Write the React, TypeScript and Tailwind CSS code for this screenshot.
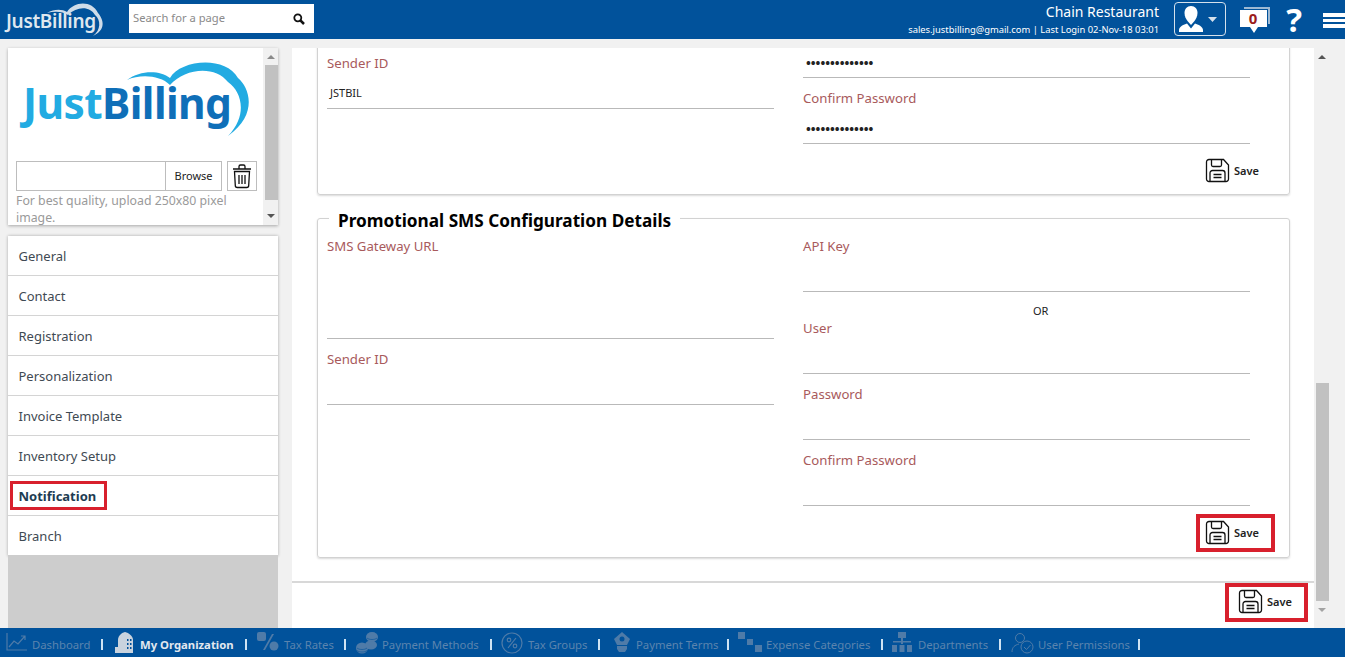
const navItems = ["General", "Contact", "Registration", "Personalization", "Invoice Template", "Inventory Setup", "Notification", "Branch"];

const footerLinks = [
  { label: "Dashboard", x: 32, icon: "dash", ix: 6 },
  { label: "My Organization", x: 140, icon: "org", ix: 115, active: true },
  { label: "Tax Rates", x: 284, icon: "pct", ix: 257 },
  { label: "Payment Methods", x: 382, icon: "coins", ix: 356 },
  { label: "Tax Groups", x: 528, icon: "pctc", ix: 501 },
  { label: "Payment Terms", x: 636, icon: "tag", ix: 613 },
  { label: "Expense Categories", x: 766, icon: "cats", ix: 738 },
  { label: "Departments", x: 918, icon: "tree", ix: 892 },
  { label: "User Permissions", x: 1038, icon: "perm", ix: 1011 },
];
const separators = [101, 245, 344, 490, 598, 727, 881, 999, 1138];

function FooterIcon({ name, active }: { name: string; active?: boolean }) {
  const c = active ? "#c9d3de" : "#4f7ba8";
  if (name === "dash")
    return (
      <svg width="22" height="20" viewBox="0 0 22 20" fill="none" stroke={c} strokeWidth="1.2">
        <path d="M1 1v17h20" />
        <path d="M3 15l5-6 4 3 7-8M15 4h4v4" />
      </svg>
    );
  if (name === "org")
    return (
      <svg width="20" height="21" viewBox="0 0 20 21" fill={c}>
        <path d="M3 8c0-4 3-7 7-8 4 1 8 4 8 8v13H3z" />
        <path d="M0 15h6v6H0z" />
        <path d="M12 7h1.500v2H12zM15 7h1.500v2H15zM12 11h1.500v2H12zM15 11h1.500v2H15zM12 15h1.500v2H12zM15 15h1.500v2H15z" fill="#01529b" />
      </svg>
    );
  if (name === "pct")
    return (
      <svg width="22" height="20" viewBox="0 0 22 20" fill={c}>
        <rect x="0" y="0" width="9" height="9" rx="2" />
        <path d="M6 18L15 2h2L8 18z" />
        <circle cx="17" cy="14" r="4.500" />
      </svg>
    );
  if (name === "coins")
    return (
      <svg width="24" height="22" viewBox="0 0 24 22" fill={c}>
        <ellipse cx="6" cy="16" rx="6" ry="5.500" />
        <ellipse cx="15" cy="13" rx="6" ry="4.500" />
        <ellipse cx="16" cy="5" rx="6" ry="5" />
        <path d="M1 16c2 2 8 2 10 0M1 18.500c2 2 8 2 10 0M11 6c2 2 8 2 10 0" fill="none" stroke="#01529b" strokeWidth="0.600" />
      </svg>
    );
  if (name === "pctc")
    return (
      <svg width="22" height="22" viewBox="0 0 22 22" fill="none" stroke={c} strokeWidth="1.200">
        <circle cx="11" cy="11" r="10" />
        <circle cx="8" cy="8" r="1.800" />
        <circle cx="14" cy="14" r="1.800" />
        <path d="M7 16l8-10" />
      </svg>
    );
  if (name === "tag")
    return (
      <svg width="18" height="21" viewBox="0 0 18 21" fill={c}>
        <path d="M9 0l8 7-3 6H4L1 7z" />
        <path d="M4 14h10v3l-2 3H6l-2-3z" />
        <circle cx="9" cy="7" r="2.500" fill="#01529b" />
      </svg>
    );
  if (name === "cats")
    return (
      <svg width="24" height="20" viewBox="0 0 24 20" fill={c}>
        <rect x="0" y="0" width="7" height="7" />
        <rect x="9" y="7" width="6" height="6" />
        <rect x="17" y="13" width="7" height="7" />
      </svg>
    );
  if (name === "tree")
    return (
      <svg width="20" height="20" viewBox="0 0 20 20" fill={c}>
        <rect x="6" y="0" width="8" height="6" />
        <rect x="9" y="6" width="2" height="6" />
        <rect x="1" y="9" width="18" height="1.500" />
        <rect x="0" y="13" width="5" height="7" />
        <rect x="7.500" y="13" width="5" height="7" />
        <rect x="15" y="13" width="5" height="7" />
      </svg>
    );
  return (
    <svg width="24" height="22" viewBox="0 0 24 22" fill="none" stroke={c} strokeWidth="1">
      <circle cx="9" cy="6" r="4.500" />
      <path d="M1 20c0-5 3-7 7-8" />
      <circle cx="16" cy="15" r="6" />
      <path d="M13 15l2.500 2.500 4-4.500" />
    </svg>
  );
}

function SaveIcon() {
  return (
    <svg width="25" height="25" viewBox="0 0 25 25" fill="none" stroke="#111" strokeWidth="1.300">
      <path d="M1.500 4a2.500 2.500 0 0 1 2.500-2.500h14.500l5 5.500v14a2.500 2.500 0 0 1-2.500 2.500H4a2.500 2.500 0 0 1-2.500-2.500z" />
      <path d="M6.500 1.500v5.500a1.500 1.500 0 0 0 1.500 1.500h7a1.500 1.500 0 0 0 1.500-1.500V1.500" />
      <path d="M5 23.500V15a2.500 2.500 0 0 1 2.500-2.500h10a2.500 2.500 0 0 1 2.500 2.500v8.500" />
      <path d="M8.500 16.500h8M8.500 19.500h8" />
    </svg>
  );
}

function SaveButton({ className }: { className: string }) {
  return (
    <div className={`absolute flex items-center gap-[4px] ${className}`}>
      <SaveIcon />
      <span className="pt-[2px] text-[11px] font-semibold text-[#222]">Save</span>
    </div>
  );
}

function Field({ label, className, value, height }: { label: string; className: string; value?: string; height: string }) {
  return (
    <div className={`absolute border-b border-[#b9b9b9] ${height} ${className}`}>
      <div className="text-[13.2px] leading-[18px] text-[#a85a5c]">{label}</div>
      {value && <div className="mt-[13px] pl-[3px] text-[11px] leading-[16px] text-[#222]">{value}</div>}
    </div>
  );
}

function Dots({ className }: { className: string }) {
  return <div className={`absolute text-[12.800px] font-bold leading-[14px] text-[#222] ${className}`}>••••••••••••••</div>;
}

function Logo() {
  return (
    <div className="absolute left-[12px] top-[12px] h-[80px] w-[236px]">
      <div className="absolute left-[3px] top-[18px] whitespace-nowrap text-[42.500px] font-bold leading-[50px] tracking-[-0.6px]">
        <span className="text-[#22abe2]">Just</span>
        <span className="text-[#0f6fb8]">Billing</span>
      </div>
      <svg className="absolute left-0 top-0" width="236" height="90" viewBox="0 0 236 90" fill="none">
        <path d="M107 20C120 10 140 10 150 18C160 0 205-5 218 18C230 28 238 55 208 76C228 55 222 32 208 22C195 5 165 8 150 25C140 15 120 14 107 20z" fill="#22abe2" />
      </svg>
    </div>
  );
}

export default function App() {
  return (
    <div className="relative h-[657px] w-[1345px] overflow-hidden bg-[#f1f1f1] font-['Open_Sans',sans-serif]">
      {/* Header */}
      <header className="absolute inset-x-0 top-0 h-[39px] bg-[#01529b] text-white">
        <div className="absolute left-[6px] top-[9px] text-[19px] font-semibold leading-[24px] tracking-[-0.3px] text-[#dfe7ef]">JustBilling</div>
        <svg className="absolute left-[44px] top-0" width="62" height="38" viewBox="0 0 62 38" fill="#cfdce9">
          <path d="M3 13C10 9 18 9 23 12C30 1 48 0 54 13C60 20 62 30 49 36C57 30 57 20 51 15C46 6 33 6 24 15C18 11 10 11 3 13z" />
        </svg>
        <div className="absolute left-[129px] top-[4px] flex h-[29px] w-[185px] items-center justify-between bg-white pl-[4px] pr-[9px]">
          <span className="text-[11.200px] text-[#8a8a8a]">Search for a page</span>
          <svg width="12" height="12" viewBox="0 0 12 12" fill="none" stroke="#111">
            <circle cx="4.800" cy="4.800" r="3.500" strokeWidth="1.800" />
            <path d="M7.500 7.500L11 11" strokeWidth="2.500" />
          </svg>
        </div>
        <div className="absolute right-[186px] top-[2px] text-right text-[14px] leading-[19px]">Chain Restaurant</div>
        <div className="absolute right-[186px] top-[23px] whitespace-nowrap text-right text-[9.400px] leading-[13px]">sales.justbilling@gmail.com | Last Login 02-Nov-18 03:01</div>
        <div className="absolute left-[1174px] top-[2px] flex h-[34px] w-[52px] items-center rounded-[4px] border border-[#d5e1ec] pl-[3px]">
          <svg width="26" height="28" viewBox="0 0 26 28" fill="white">
            <path d="M13 1c4 0 6.500 3 6.500 7 0 3-1.500 6-3 8l-3.500 4-3.500-4c-1.500-2-3-5-3-8 0-4 2.500-7 6.500-7z" />
            <path d="M9 18.500l4 5 4-5c3 1 8 3 8 6.500v2H1v-2c0-3.500 5-5.500 8-6.500z" />
          </svg>
          <svg className="ml-[4px]" width="9" height="5" viewBox="0 0 9 5" fill="#d5e1ec">
            <path d="M0 0h9L4.500 5z" />
          </svg>
        </div>
        <svg className="absolute left-[1240px] top-[6px]" width="30" height="28" viewBox="0 0 30 28">
          <path d="M4 1h26v17h-2V3H4z" fill="#9db9d3" />
          <path d="M0 4h27v17H18l-4 6-4-6H0z" fill="white" />
          <text x="13" y="18" textAnchor="middle" fontSize="15" fontWeight="700" fill="#9b1c1c" fontFamily="Open Sans">0</text>
        </svg>
        <div className="absolute left-[1282px] top-0 h-[39px] w-[24px] text-center font-['Liberation_Sans',sans-serif] text-[33px] font-bold leading-[40px]">?</div>
        <div className="absolute left-[1323px] top-[13px] flex w-[22px] flex-col gap-[2px]">
          <div className="h-[3.500px] bg-white" />
          <div className="h-[3.500px] bg-white" />
          <div className="h-[3.500px] bg-white" />
        </div>
      </header>

      {/* Logo card */}
      <div className="absolute left-[8px] top-[48px] h-[177px] w-[270px] bg-white shadow-[0_1px_3px_rgba(0,0,0,0.3)]">
        <Logo />
        <div className="absolute left-[8px] top-[113px] flex h-[30px] w-[206px] border border-[#bdbdbd]">
          <div className="flex-1" />
          <div className="flex w-[56px] items-center justify-center border-l border-[#bdbdbd] text-[11px] text-[#222]">Browse</div>
        </div>
        <div className="absolute left-[219px] top-[113px] flex h-[30px] w-[30px] items-center justify-center border border-[#bdbdbd]">
          <svg width="20" height="25" viewBox="0 0 20 25" fill="none" stroke="#111" strokeWidth="1.300">
            <path d="M1 5h18M7 4.500V2.500a1.500 1.500 0 0 1 1.500-1.500h3A1.500 1.500 0 0 1 13 2.500v2" />
            <path d="M2.500 7.500h15l-.8 14a2 2 0 0 1-2 2H5.300a2 2 0 0 1-2-2z" />
            <path d="M7 11v9M10 11v9M13 11v9" />
          </svg>
        </div>
        <div className="absolute left-[8px] top-[144px] w-[240px] text-[12.300px] leading-[17px] text-[#9a9a9a]">For best quality, upload 250x80 pixel image.</div>
        <div className="absolute right-0 top-0 h-full w-[15px] bg-[#f1f1f1]">
          <div className="absolute left-[2px] top-[17px] h-[135px] w-[13px] bg-[#c1c1c1]" />
          <div className="absolute left-[4px] top-[7px] h-0 w-0 border-x-[4px] border-b-[4px] border-x-transparent border-b-[#8a8a8a]" />
          <div className="absolute bottom-[7px] left-[4px] h-0 w-0 border-x-[4px] border-t-[4px] border-x-transparent border-t-[#555]" />
        </div>
      </div>

      {/* Sidebar nav */}
      <nav className="absolute left-[8px] top-[236px] w-[270px] bg-white shadow-[0_0_3px_rgba(0,0,0,0.3)]">
        {navItems.map((item) => (
          <div
            key={item}
            className={`flex h-[40px] items-center border-b border-[#d4d4d4] pl-[10.500px] pt-[2px] text-[13px] last:border-b-0 ${item === "Notification" ? "font-bold text-[#1d3c52]" : "text-[#3f4a53]"}`}
          >
            {item}
          </div>
        ))}
      </nav>
      <div className="absolute left-[8px] top-[555px] h-[73px] w-[270px] bg-[#cdcdcd]" />
      <div className="absolute left-[10px] top-[481px] h-[29px] w-[97px] border-[3px] border-[#d8202d]" />

      {/* Main panel */}
      <main className="absolute left-[292px] top-[48px] h-[580px] w-[1022px] overflow-hidden bg-white">
        <div className="absolute left-[25px] top-[-10px] h-[157px] w-[973px] rounded-[3px] border border-[#d2d2d2] shadow-[0_1px_2px_rgba(0,0,0,0.15)]" />
        <Field label="Sender ID" value="JSTBIL" className="left-[35px] top-[6px] w-[447px]" height="h-[55px]" />
        <Dots className="left-[514px] top-[8px]" />
        <div className="absolute left-[511px] top-[29px] w-[447px] border-b border-[#b9b9b9]" />
        <Field label="Confirm Password" className="left-[511px] top-[41px] w-[447px]" height="h-[55px]" />
        <Dots className="left-[514px] top-[74px]" />
        <SaveButton className="left-[913px] top-[110px]" />

        <div className="absolute left-[25px] top-[170px] h-[340px] w-[973px] rounded-[3px] border border-[#d2d2d2] shadow-[0_1px_2px_rgba(0,0,0,0.15)]" />
        <div className="absolute left-[37px] top-[161px] bg-white px-[9px] text-[17.200px] font-bold leading-[24px] text-black">Promotional SMS Configuration Details</div>
        <Field label="SMS Gateway URL" className="left-[35px] top-[189px] w-[447px]" height="h-[102px]" />
        <Field label="Sender ID" className="left-[35px] top-[302px] w-[447px]" height="h-[55px]" />
        <Field label="API Key" className="left-[511px] top-[189px] w-[447px]" height="h-[55px]" />
        <div className="absolute left-[741px] top-[255px] text-[11px] leading-[16px] text-[#222]">OR</div>
        <Field label="User" className="left-[511px] top-[271px] w-[447px]" height="h-[55px]" />
        <Field label="Password" className="left-[511px] top-[337px] w-[447px]" height="h-[55px]" />
        <Field label="Confirm Password" className="left-[511px] top-[403px] w-[447px]" height="h-[55px]" />
        <SaveButton className="left-[913px] top-[472px]" />

        <div className="absolute inset-x-0 top-[533px] h-[2px] bg-[#d8d8d8]" />
        <SaveButton className="left-[946px] top-[541px]" />
      </main>

      {/* Page scrollbar */}
      <div className="absolute left-[1315px] top-[48px] h-[580px] w-[15px] bg-[#f1f1f1]">
        <div className="absolute left-[1px] top-[335px] h-[218px] w-[13px] bg-[#c1c1c1]" />
        <div className="absolute left-[3px] top-[7px] h-0 w-0 border-x-[4px] border-b-[4px] border-x-transparent border-b-[#555]" />
        <div className="absolute bottom-[16px] left-[3px] h-0 w-0 border-x-[4px] border-t-[4px] border-x-transparent border-t-[#a3a3a3]" />
      </div>

      {/* Red highlights */}
      <div className="absolute left-[1196px] top-[514px] h-[38px] w-[79px] border-[4px] border-[#d8202d]" />
      <div className="absolute left-[1225px] top-[583px] h-[39px] w-[83px] border-[4px] border-[#d8202d]" />

      {/* Footer */}
      <footer className="absolute inset-x-0 bottom-0 h-[29px] bg-[#01529b] text-[11.300px]">
        {footerLinks.map((link) => (
          <div key={link.label}>
            <div className="absolute top-[4px]" style={{ left: link.ix }}>
              <FooterIcon name={link.icon} active={link.active} />
            </div>
            <span
              className={`absolute top-[8px] leading-[17px] ${link.active ? "font-bold text-[#e2e8ef]" : "text-[#5b84ae]"}`}
              style={{ left: link.x }}
            >
              {link.label}
            </span>
          </div>
        ))}
        {separators.map((x) => (
          <div key={x} className="absolute top-[11px] h-[11px] w-[2px] bg-[#cfe3f3]" style={{ left: x }} />
        ))}
      </footer>
    </div>
  );
}
